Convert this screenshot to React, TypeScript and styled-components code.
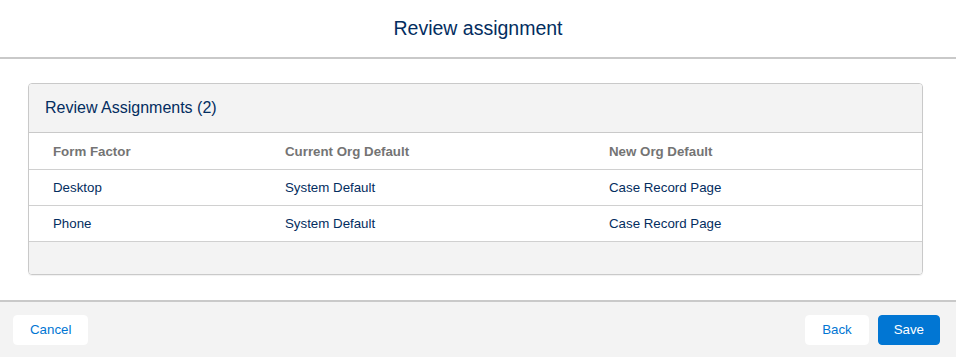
import { FC } from "react";
import styled, { createGlobalStyle } from "styled-components";

const GlobalStyle = createGlobalStyle`
  html, body {
    margin: 0;
    padding: 0;
    background: #fff;
  }
  body {
    font-family: "Liberation Sans", Arial, sans-serif;
    -webkit-font-smoothing: antialiased;
  }
`;

const StyledModal = styled.div`
  width: 956px;
  height: 357px;
  display: flex;
  flex-direction: column;
  background: #fff;
  overflow: hidden;
`;

const Header = styled.header`
  height: 57px;
  flex-shrink: 0;
  border-bottom: 2px solid #c9c9c9;
  display: flex;
  align-items: center;
  justify-content: center;
  h2 {
    margin: 0;
    font-size: 19.5px;
    font-weight: 400;
    color: #032d60;
  }
`;

const Body = styled.div`
  flex: 1;
  padding: 24px 33px 24px 28px;
  box-sizing: border-box;
`;

const Card = styled.section`
  border: 1px solid #c9c9c9;
  border-radius: 4px;
  overflow: hidden;
  box-shadow: 0 1px 1px rgba(0, 0, 0, 0.06);
  .card-title {
    height: 48px;
    background: #f3f3f3;
    border-bottom: 1px solid #c9c9c9;
    display: flex;
    align-items: center;
    padding-left: 16px;
    font-size: 16px;
    color: #032d60;
  }
  .card-footer {
    height: 32px;
    background: #f3f3f3;
  }
`;

const Row = styled.div<{ $head?: boolean }>`
  display: grid;
  grid-template-columns: 232px 324px 1fr;
  height: ${(p) => (p.$head ? 36 : 35)}px;
  align-items: center;
  padding-left: 24px;
  border-bottom: 1px solid #d0d0d0;
  font-size: 13.3px;
  font-weight: ${(p) => (p.$head ? 700 : 400)};
  color: ${(p) => (p.$head ? "#747474" : "#032d60")};
`;

const Footer = styled.footer`
  height: 55px;
  flex-shrink: 0;
  border-top: 2px solid #c9c9c9;
  background: #f3f3f3;
  display: flex;
  align-items: center;
  padding: 0 16px 0 13px;
  .spacer {
    flex: 1;
  }
  .actions {
    display: flex;
    gap: 9px;
  }
`;

const Button = styled.button<{ $brand?: boolean }>`
  height: 30px;
  padding: 0 ${(p) => (p.$brand ? 15 : 16)}px;
  border: 1px solid ${(p) => (p.$brand ? "#0176d3" : "#fff")};
  border-radius: 4px;
  background: ${(p) => (p.$brand ? "#0176d3" : "#fff")};
  color: ${(p) => (p.$brand ? "#fff" : "#0176d3")};
  font-family: "Liberation Sans", Arial, sans-serif;
  font-size: 13.3px;
  cursor: pointer;
`;

const rows = [
  { factor: "Desktop", current: "System Default", next: "Case Record Page" },
  { factor: "Phone", current: "System Default", next: "Case Record Page" },
];

const App: FC = () => {
  return (
    <>
      <GlobalStyle />
      <StyledModal>
        <Header>
          <h2>Review assignment</h2>
        </Header>
        <Body>
          <Card>
            <div className="card-title">Review Assignments ({rows.length})</div>
            <Row $head>
              <span>Form Factor</span>
              <span>Current Org Default</span>
              <span>New Org Default</span>
            </Row>
            {rows.map((r) => (
              <Row key={r.factor}>
                <span>{r.factor}</span>
                <span>{r.current}</span>
                <span>{r.next}</span>
              </Row>
            ))}
            <div className="card-footer" />
          </Card>
        </Body>
        <Footer>
          <Button>Cancel</Button>
          <div className="spacer" />
          <div className="actions">
            <Button>Back</Button>
            <Button $brand>Save</Button>
          </div>
        </Footer>
      </StyledModal>
    </>
  );
};

export default App;
